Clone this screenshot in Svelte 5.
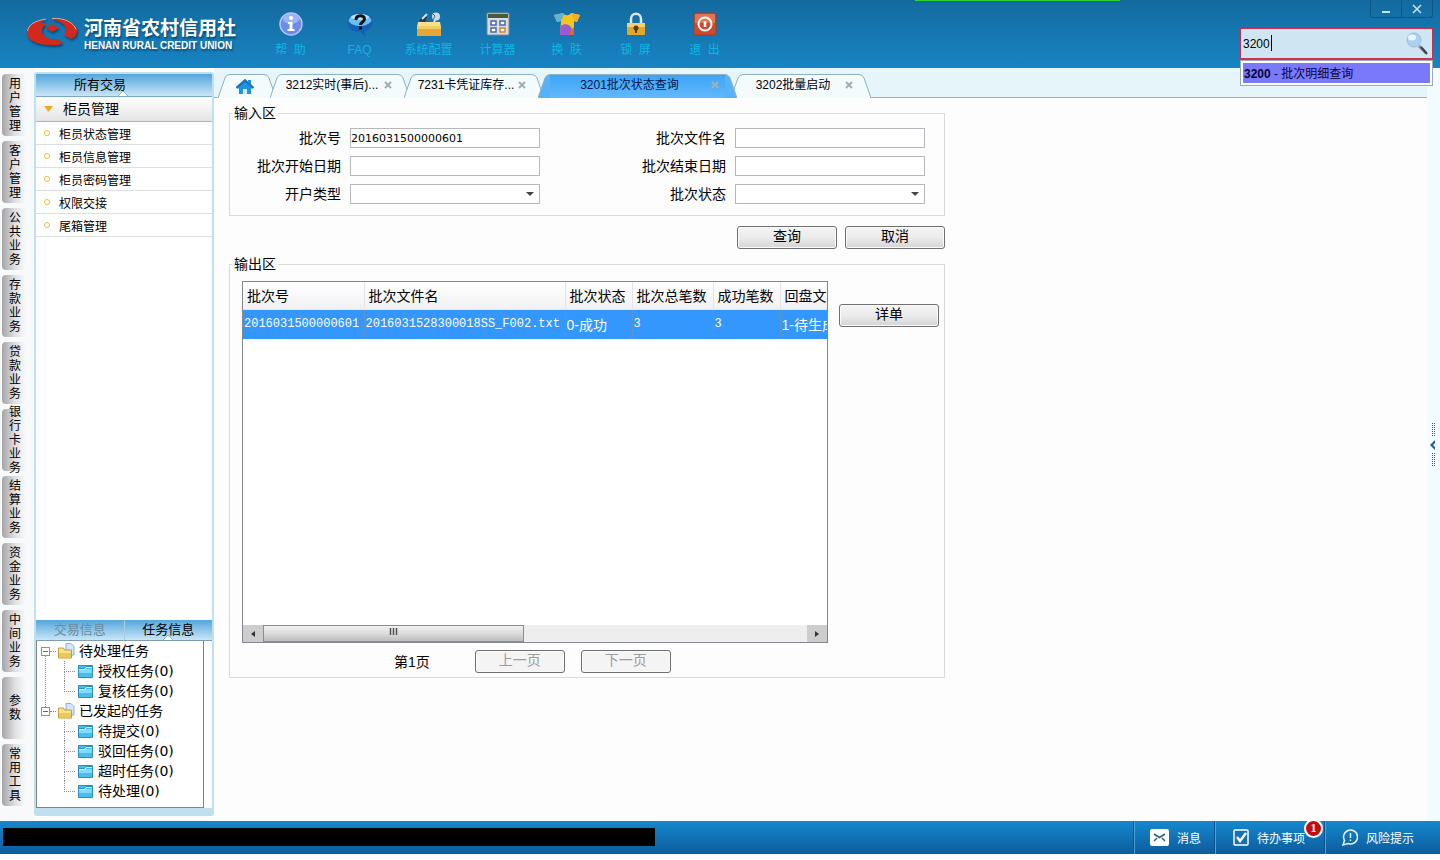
<script>
    let code = $state("3200");
    let batchNo = $state("2016031500000601");
    let activeTab = $state("3201批次状态查询");

    const tools = [
        { icon: "help", label: "帮\u00a0 助" },
        { icon: "faq", label: "FAQ" },
        { icon: "config", label: "系统配置" },
        { icon: "calc", label: "计算器" },
        { icon: "skin", label: "换\u00a0 肤" },
        { icon: "lock", label: "锁\u00a0 屏" },
        { icon: "exit", label: "退\u00a0 出" }
    ];

    const modules = [
        "用户管理", "客户管理", "公共业务", "存款业务", "贷款业务", "银行卡业务",
        "结算业务", "资金业务", "中间业务", "参数", "常用工具"
    ];

    const menu = ["柜员状态管理", "柜员信息管理", "柜员密码管理", "权限交接", "尾箱管理"];

    const tasks = [
        { name: "待处理任务", children: ["授权任务(0)", "复核任务(0)"] },
        { name: "已发起的任务", children: ["待提交(0)", "驳回任务(0)", "超时任务(0)", "待处理(0)"] }
    ];

    const tabs = ["3212实时(事后)...", "7231卡凭证库存...", "3201批次状态查询", "3202批量启动"];

    const columns = ["批次号", "批次文件名", "批次状态", "批次总笔数", "成功笔数", "回盘文"];
    const rows = [
        ["2016031500000601", "2016031528300018SS_F002.txt", "0-成功", "3", "3", "1-待生成"]
    ];
</script>

{#snippet toolIcon(name)}
    <svg class="tool-icon" viewBox="0 0 28 26" aria-hidden="true">
        {#if name === "help"}
            <circle cx="14" cy="12" r="11" fill="#6d8be8" stroke="#b4c6f7" stroke-width="1.5" />
            <ellipse cx="14" cy="7" rx="8" ry="5" fill="#9db4f5" />
            <circle cx="14" cy="6" r="2" fill="#fff" />
            <path d="M11 10h4.500v7h2v2h-7v-2h2v-5h-1.500z" fill="#fff" />
        {:else if name === "faq"}
            <path d="M14 1c8 0 12.500 4 12.500 9.500 0 5-4 8-8 9l1 5-5-4.500C6 20 1.500 16 1.500 10.500S6 1 14 1z" fill="#1560b4" />
            <path d="M14 2c7 0 11 3 11.500 7-3 4-8 5-11.500 5S5 13 2.500 9C3.500 4 8 2 14 2z" fill="#6dbcf2" />
            <ellipse cx="14" cy="5" rx="9" ry="3" fill="#b5e0fb" />
            <path d="M10 8c0-5.500 8.500-5.500 8.500-1 0 3-4 3-4 6" fill="none" stroke="#111" stroke-width="3" />
            <rect x="13" y="14.500" width="3" height="3" fill="#111" />
        {:else if name === "config"}
            <path d="M4 9l4-5 4 1-2 5z" fill="#333" />
            <path d="M7 7L12 2M19 10l3-7" stroke="#ddd" stroke-width="2" />
            <circle cx="21" cy="4.500" r="4" fill="#cfdbe4" />
            <path d="M17 1l3 3-2 4" stroke="#567" fill="none" />
            <path d="M3 10h22l1 5H2z" fill="#f9df8e" />
            <rect x="2" y="14" width="24" height="10" fill="#e3a637" />
            <rect x="2" y="14" width="24" height="3" fill="#f4ca62" />
        {:else if name === "calc"}
            <rect x="3" y="1" width="22" height="22" rx="1" fill="#d9dcdf" stroke="#7d858c" />
            <rect x="4" y="2" width="20" height="4" fill="#4a5b36" />
            <g fill="#fff" stroke="#4b68a6" stroke-width="1.500">
                <rect x="7" y="9" width="5" height="4" />
                <rect x="16" y="9" width="5" height="4" />
                <rect x="7" y="16" width="5" height="4" />
                <rect x="16" y="16" width="5" height="4" stroke="#d78230" />
            </g>
        {:else if name === "skin"}
            <path d="M10 1L1 3l3 7 4-1-1 14h14V9l3 1 3-7-9-2c-2 3-6 3-8 0z" fill="#f6c51f" />
            <path d="M10 1L1 3l3 7 4-1 3-6z" fill="#63b4d4" />
            <path d="M18 1l9 2-3 7-3-1z" fill="#f2ae2e" />
            <path d="M7.500 14c4-3 9-2 11 2 1 3 0 5-2 7H7z" fill="#9a5ad2" />
            <path d="M18 18l3-3v8h-5z" fill="#e8603c" />
        {:else if name === "lock"}
            <path d="M9 12V7c0-7 10-7 10 0v5" fill="none" stroke="#e2e5e8" stroke-width="2.500" />
            <rect x="5" y="11" width="18" height="12" rx="1" fill="#e0a62e" />
            <rect x="5" y="11" width="18" height="4" fill="#f6d169" />
            <circle cx="14" cy="16" r="2.500" fill="#5c3d0c" />
            <rect x="13" y="16" width="2" height="5" fill="#5c3d0c" />
        {:else}
            <rect x="3" y="1" width="22" height="22" rx="2" fill="#cd4a2e" stroke="#a83a26" />
            <rect x="4" y="2" width="20" height="9" fill="#e07555" />
            <circle cx="14" cy="12" r="6.500" fill="none" stroke="#fff" stroke-width="2" />
            <path d="M14 9v6" stroke="#fff" stroke-width="2.500" />
        {/if}
    </svg>
{/snippet}

{#snippet notch()}
    <svg class="notch" viewBox="0 0 10 5" aria-hidden="true">
        <path d="M0 5L5 0l5 5" fill="#fff" stroke="#7db4d6" />
    </svg>
{/snippet}

{#snippet tabEdge(side)}
    <svg class="tab-edge" viewBox="0 0 12 24" aria-hidden="true">
        {#if side === "left"}
            <path d="M0 24L7 4Q8.500 .5 12 .5V24z" class="fill" />
            <path d="M0 24L7 4Q8.500 .5 12 .5" class="line" />
        {:else}
            <path d="M12 24L5 4Q3.500 .5 0 .5V24z" class="fill" />
            <path d="M12 24L5 4Q3.500 .5 0 .5" class="line" />
        {/if}
    </svg>
{/snippet}

<div class="app">
    <header>
        <div class="logo">
            <svg class="emblem" viewBox="0 0 52 30" aria-hidden="true">
                <path d="M20 2C8 4 1 9 1 16c0 8 12 13 31 12l5-2-6-4c-9 1-15-3-15-8 0-3 1-5 4-7l-6-2z" fill="#d3281c" />
                <path d="M26 2c15-2 25 5 25 12 0 4-2 6-6 8l-7-4c3-3 3-7 0-10-3-3-7-5-12-6z" fill="#d3281c" />
                <path d="M26 1.500c12-1 22 4 24 11M1.500 14C3 7 9 4 20 2" fill="none" stroke="#f0a392" stroke-width="1" />
                <path d="M26 7l7 4-7 4-6-4z" fill="#d3281c" />
            </svg>
            <div class="brand">
                <strong>河南省农村信用社</strong>
                <span>HENAN RURAL CREDIT UNION</span>
            </div>
        </div>
        <nav class="tools">
            {#each tools as tool}
                <button type="button">
                    {@render toolIcon(tool.icon)}
                    <span>{tool.label}</span>
                </button>
            {/each}
        </nav>
        <div class="progress"></div>
        <div class="corner">
            <div class="window-buttons">
                <button type="button" aria-label="最小化">
                    <svg width="10" height="10" viewBox="0 0 10 10"><path d="M1 8h8" stroke="#c8e4f4" stroke-width="2" /></svg>
                </button>
                <button type="button" aria-label="关闭">
                    <svg width="10" height="10" viewBox="0 0 10 10"><path d="M1 1l8 8M9 1L1 9" stroke="#c8e4f4" stroke-width="1.500" /></svg>
                </button>
            </div>
            <div class="search">
                <input type="text" aria-label="交易码" bind:value={code} />
                <i class="caret"></i>
                <svg class="magnifier" viewBox="0 0 24 24" aria-hidden="true">
                    <path d="M14 14l7 7" stroke="#8a8f94" stroke-width="3" />
                    <path d="M16 15l6 7" stroke="#3c4146" stroke-width="2" />
                    <circle cx="9" cy="8" r="7" fill="#a9d2f2" stroke="#9dbbd9" stroke-width="1" />
                    <ellipse cx="7" cy="5.500" rx="4" ry="3" fill="#e9f6ff" />
                </svg>
            </div>
            <ul class="suggest">
                <li><button type="button"><b>3200</b> - 批次明细查询</button></li>
            </ul>
        </div>
    </header>

    <div class="body">
        <nav class="rail">
            {#each modules as name}
                <button type="button"><span>{name}</span></button>
            {/each}
        </nav>

        <aside>
            <div class="side-head">
                <span>所有交易{@render notch()}</span>
            </div>
            <button type="button" class="group">
                <svg width="9" height="7" viewBox="0 0 9 7" aria-hidden="true"><path d="M0 1h9L5 6.500H4z" fill="#eba928" /></svg>
                柜员管理
            </button>
            <ul class="menu">
                {#each menu as item}
                    <li><button type="button">{item}</button></li>
                {/each}
            </ul>
            <div class="side-tabs">
                <button type="button">交易信息</button>
                <button type="button" class="on">任务信息{@render notch()}</button>
            </div>
            <ul class="tree">
                {#each tasks as task}
                    <li class="branch">
                        <div class="node">
                            <button type="button" class="toggle" aria-label="折叠"></button>
                            <i class="dots"></i>
                            <svg width="17" height="16" viewBox="0 0 17 16" aria-hidden="true">
                                <path d="M8 .5h5l3 3V12H8z" fill="#d3e6fb" stroke="#86aee0" />
                                <path d="M.5 5h5l1 2h7v8h-13z" fill="#f8e28c" stroke="#c69c38" />
                                <path d="M1 10h12v4H1z" fill="#eec858" />
                            </svg>
                            <span>{task.name}</span>
                        </div>
                        <ul>
                            {#each task.children as child}
                                <li class="leaf">
                                    <svg width="15" height="13" viewBox="0 0 15 13" aria-hidden="true">
                                        <path d="M.5 .5h14v12H.5z" fill="#45bff0" stroke="#2a8cc0" />
                                        <path d="M1 4h13v4H1z" fill="#85dafa" />
                                        <path d="M1 3.500h5l2-2h6" fill="none" stroke="#2a8cc0" />
                                        <path d="M1 4.500h6l1-2h6" fill="none" stroke="#d8f3ff" />
                                    </svg>
                                    <span>{child}</span>
                                </li>
                            {/each}
                        </ul>
                    </li>
                {/each}
            </ul>
        </aside>

        <main>
            <div class="tabs">
                <div class="tab home">
                    {@render tabEdge("left")}
                    <button type="button" class="tab-label" aria-label="首页">
                        <svg width="18" height="16" viewBox="0 0 18 16" aria-hidden="true">
                            <path d="M9 0L0 8l1 1.500h2V15h4v-5h4v5h4V9.500h2L18 8l-3-2.500V1h-3v2z" fill="#1f93e2" />
                            <path d="M9 0L0 8l1 1.500L9 3l8 6.500L18 8z" fill="#1673bb" />
                            <path d="M8.500 10v5M10 10v5" stroke="#bfe4fb" />
                        </svg>
                    </button>
                    {@render tabEdge("right")}
                </div>
                {#each tabs as tab}
                    <div class="tab" class:active={tab === activeTab}>
                        {@render tabEdge("left")}
                        <button type="button" class="tab-label" onclick={() => (activeTab = tab)}>{tab}</button>
                        <button type="button" class="close" aria-label="关闭标签">
                            <svg width="8" height="8" viewBox="0 0 8 8"><path d="M1 1l6 6M7 1L1 7" stroke="#a4adb2" stroke-width="2" /></svg>
                        </button>
                        {@render tabEdge("right")}
                    </div>
                {/each}
            </div>

            <div class="content">
                <fieldset>
                    <legend>输入区</legend>
                    <div class="form">
                        <label for="batch-no">批次号</label>
                        <input id="batch-no" type="text" bind:value={batchNo} />
                        <label for="file-name">批次文件名</label>
                        <input id="file-name" type="text" />
                        <label for="start-date">批次开始日期</label>
                        <input id="start-date" type="text" />
                        <label for="end-date">批次结束日期</label>
                        <input id="end-date" type="text" />
                        <label for="open-type">开户类型</label>
                        <div class="select"><select id="open-type"><option></option></select></div>
                        <label for="batch-state">批次状态</label>
                        <div class="select"><select id="batch-state"><option></option></select></div>
                    </div>
                </fieldset>

                <div class="actions">
                    <button type="button" class="btn">查询</button>
                    <button type="button" class="btn">取消</button>
                </div>

                <fieldset>
                    <legend>输出区</legend>
                    <div class="output">
                        <div class="result">
                            <div class="grid">
                                <div class="viewport">
                                    <table>
                                        <thead>
                                            <tr>
                                                {#each columns as column}
                                                    <th>{column}</th>
                                                {/each}
                                            </tr>
                                        </thead>
                                        <tbody>
                                            {#each rows as row}
                                                <tr>
                                                    {#each row as cell}
                                                        <td class:state={cell.includes("-")}>{cell}</td>
                                                    {/each}
                                                </tr>
                                            {/each}
                                        </tbody>
                                    </table>
                                </div>
                                <div class="scrollbar">
                                    <button type="button" aria-label="向左">
                                        <svg width="4" height="6" viewBox="0 0 4 6"><path d="M4 0v6L0 3z" fill="#333" /></svg>
                                    </button>
                                    <div class="track">
                                        <div class="thumb">
                                            <svg width="9" height="7" viewBox="0 0 9 7"><path d="M1.500 0v7M4.500 0v7M7.500 0v7" stroke="#555" stroke-width="1.500" /></svg>
                                        </div>
                                    </div>
                                    <button type="button" aria-label="向右">
                                        <svg width="4" height="6" viewBox="0 0 4 6"><path d="M0 0v6l4-3z" fill="#333" /></svg>
                                    </button>
                                </div>
                            </div>
                            <div class="pager">
                                <span>第1页</span>
                                <button type="button" class="btn" disabled>上一页</button>
                                <button type="button" class="btn" disabled>下一页</button>
                            </div>
                        </div>
                        <button type="button" class="btn detail">详单</button>
                    </div>
                </fieldset>
            </div>
        </main>

        <button type="button" class="handle" aria-label="展开">
            <svg width="3" height="44" viewBox="0 0 3 44">
                <path d="M.5 0v14M2.500 0v14M.5 30v14M2.500 30v14" stroke="#245f91" stroke-dasharray="1 1" />
            </svg>
            <svg class="arrow" width="5" height="10" viewBox="0 0 5 10"><path d="M5 0v3L3 5l2 2v3L0 5z" fill="#1f5f95" /></svg>
        </button>
    </div>

    <footer>
        <div class="status"></div>
        <button type="button" class="message">
            <svg width="19" height="17" viewBox="0 0 19 17" aria-hidden="true">
                <rect x="0" y="0" width="19" height="17" rx="2" fill="#fff" />
                <path d="M4 5l5.500 3.500L15 5M4 12l3-3M15 12l-3-3" fill="none" stroke="#2a5f80" stroke-width="1.500" />
            </svg>
            消息
        </button>
        <button type="button" class="todo">
            <svg width="16" height="17" viewBox="0 0 16 17" aria-hidden="true">
                <rect x="1" y="1" width="14" height="15" rx="1" fill="#1670b0" stroke="#fff" stroke-width="1.500" />
                <path d="M4 8l3 4 6-8" fill="none" stroke="#fff" stroke-width="2.500" />
            </svg>
            待办事项
            <em>1</em>
        </button>
        <button type="button" class="risk">
            <svg width="17" height="18" viewBox="0 0 17 18" aria-hidden="true">
                <path d="M3.500 12.500A7 7 0 1 1 7 15.500L2 17z" fill="none" stroke="#e6f3fb" stroke-width="1.500" />
                <path d="M9.500 5v5M9.500 11.500v1.500" stroke="#e6f3fb" stroke-width="1.500" />
            </svg>
            风险提示
        </button>
    </footer>
</div>

<style>
:global(body) {
    background: #fdfdfe;
}

.app {
    display: flex;
    flex-direction: column;
    min-height: 100vh;
    box-sizing: border-box;
    padding-bottom: 6px;
    font-family: "Liberation Sans", "Noto Sans CJK SC", sans-serif;
    font-size: 12px;
    color: #000;
}

button,
input,
select {
    font: inherit;
    color: inherit;
    margin: 0;
    padding: 0;
    border: none;
    background: none;
    box-sizing: border-box;
}

ul {
    list-style: none;
    margin: 0;
    padding: 0;
}

svg {
    display: block;
    flex: none;
}

/* top bar */
header {
    position: relative;
    display: flex;
    height: 68px;
    background: linear-gradient(#136a9f, #1884c3);
}

.logo {
    display: flex;
    width: 230px;
    padding-left: 26px;
    padding-top: 17px;
    gap: 6px;
}

.emblem {
    width: 52px;
    height: 30px;
    filter: drop-shadow(1px 2px 1px #0a4a75);
}

.brand {
    display: flex;
    flex-direction: column;
    padding-top: 1px;
    color: #fff;
    white-space: nowrap;
    text-shadow: 1px 2px 2px #0a4a75;
}

.brand strong {
    font-size: 19px;
    line-height: 22px;
}

.brand span {
    font-size: 10px;
    font-weight: bold;
    line-height: 12px;
}

.tools {
    display: flex;
}

.tools button {
    display: flex;
    flex-direction: column;
    align-items: center;
    width: 69px;
    padding-top: 12px;
    color: #0fb5e4;
    line-height: 24px;
}

.tool-icon {
    width: 28px;
    height: 26px;
}

.progress {
    position: absolute;
    top: 0;
    left: 915px;
    width: 205px;
    height: 1px;
    background: #2fd52f;
}

.corner {
    position: absolute;
    z-index: 2;
    top: 0;
    right: 7px;
    width: 193px;
}

.window-buttons {
    display: flex;
    width: 63px;
    height: 18px;
    margin-left: auto;
    margin-bottom: 10px;
    border: 1px solid #0f5682;
    border-top: none;
    border-radius: 0 0 3px 3px;
    box-sizing: border-box;
}

.window-buttons button {
    display: flex;
    flex: 1;
    align-items: center;
    justify-content: center;
}

.window-buttons button + button {
    border-left: 1px solid #0f5682;
}

.search {
    position: relative;
    display: flex;
    height: 31px;
    padding: 0 3px 0 2px;
    align-items: center;
    border: 1px solid #c8304c;
    background: #cfe6f2;
    box-sizing: border-box;
}

.search input {
    flex: 1;
    min-width: 0;
    outline: none;
}

.caret {
    position: absolute;
    left: 30px;
    top: 6px;
    width: 1px;
    height: 16px;
    background: #000;
}

.magnifier {
    width: 24px;
    height: 24px;
}

.suggest {
    margin-top: 1px;
    padding: 2px;
    border: 1px solid #9aa9b5;
    background: #fff;
}

.suggest button {
    display: block;
    width: 100%;
    padding-left: 1px;
    padding-top: 2px;
    background: #7b79fb;
    color: #06063a;
    text-align: left;
    line-height: 18px;
}

/* middle area */
.body {
    display: flex;
    flex: 1;
    background: #fdfdfe;
}

.rail {
    display: flex;
    flex-direction: column;
    gap: 5px;
    width: 34px;
    padding: 6px 0 0 2px;
    box-sizing: border-box;
    background: #f8f9fa;
}

.rail button {
    display: flex;
    align-items: center;
    justify-content: center;
    width: 26px;
    height: 62px;
    border-radius: 4px 0 0 4px;
    background: linear-gradient(90deg, #a4a4a6, #e0e0e2 50%, #f8f9fa 90%);
    line-height: 14px;
}

/* one character per line */
.rail span {
    width: 12px;
    overflow-wrap: anywhere;
}

aside {
    display: flex;
    flex-direction: column;
    width: 180px;
    margin: 4px 0 5px;
    border: 2px solid #bfe0ee;
    border-bottom-width: 8px;
    border-radius: 3px;
    box-sizing: border-box;
    background: #fff;
}

.side-head {
    padding-left: 38px;
    border-bottom: 1px solid #79a9c6;
    background: linear-gradient(#54a5dc, #c9e6f7);
    font-size: 13px;
    line-height: 22px;
}

.side-head span,
.side-tabs button {
    position: relative;
}

.notch {
    position: absolute;
    bottom: -4px;
    right: -2px;
    width: 10px;
    height: 5px;
}

.group {
    display: flex;
    align-items: center;
    gap: 10px;
    height: 25px;
    padding-left: 8px;
    padding-bottom: 2px;
    border-bottom: 1px solid #b4b4b4;
    background: linear-gradient(#fff, #e4e4e4);
    font-size: 14px;
}

.menu {
    flex: 1;
}

.menu button {
    display: flex;
    align-items: center;
    gap: 9px;
    width: 100%;
    height: 23px;
    padding-left: 8px;
    border-bottom: 1px solid #dcdfe4;
}

.menu button::before {
    content: "";
    width: 4px;
    height: 4px;
    border: 1px solid #e8bd48;
    border-radius: 50%;
}

.side-tabs {
    display: flex;
    border-bottom: 1px solid #7f9db0;
    background: linear-gradient(#54a5dc, #c9e6f7);
    font-size: 13px;
    line-height: 20px;
}

.side-tabs button {
    flex: 1;
    color: #6b8ba0;
}

.side-tabs button + button {
    border-left: 1px solid #a9cfe6;
}

.side-tabs .on {
    color: #000;
}

.side-tabs .notch {
    right: 39px;
    bottom: 0;
}

.tree {
    margin-right: 8px;
    padding: 0 0 6px 4px;
    border: 1px solid #7d8388;
    border-top: none;
    font-family: "DejaVu Sans", "Noto Sans CJK SC", sans-serif;
    font-size: 14px;
    line-height: 20px;
    white-space: nowrap;
}

.branch {
    position: relative;
}

.branch:not(:last-child)::after {
    content: "";
    position: absolute;
    left: 4px;
    top: 15px;
    bottom: -6px;
    border-left: 1px dotted #888;
}

.node {
    display: flex;
    align-items: center;
    height: 20px;
}

.toggle {
    width: 9px;
    height: 9px;
    border: 1px solid #8d9297;
    background: linear-gradient(#666, #666) center / 5px 1px no-repeat #fff;
}

.dots {
    width: 6px;
    margin-right: 2px;
    border-top: 1px dotted #888;
}

.node span {
    padding-left: 4px;
}

.leaf {
    position: relative;
    display: flex;
    align-items: center;
    gap: 5px;
    height: 20px;
    padding-left: 37px;
}

.leaf::before {
    content: "";
    position: absolute;
    left: 23px;
    top: 0;
    width: 10px;
    height: 10px;
    border: dotted #888;
    border-width: 0 0 1px 1px;
}

.leaf:not(:last-child)::after {
    content: "";
    position: absolute;
    left: 23px;
    top: 10px;
    height: 10px;
    border-left: 1px dotted #888;
}

/* work area */
main {
    flex: 1;
    min-width: 0;
}

.tabs {
    display: flex;
    height: 30px;
    padding: 6px 0 0 4px;
    border-bottom: 1px solid #8fb5c9;
    box-sizing: border-box;
    background: #e6f5fa;
}

.tab {
    position: relative;
    display: flex;
    width: 140px;
    height: 24px;
    margin-right: -6px;
}

.tab.home {
    width: 58px;
}

.tab.active {
    z-index: 1;
    width: 199px;
    color: #03164d;
}

.tab-edge {
    width: 12px;
    height: 24px;
}

.tab-edge .fill {
    fill: #f4fbfd;
}

.tab-edge .line {
    fill: none;
    stroke: #8fb0c0;
}

.active .tab-edge .fill {
    fill: #55b2fb;
}

.tab-label,
.close {
    border-top: 1px solid #8fb0c0;
    background: #f4fbfd;
    white-space: nowrap;
}

.tab-label {
    display: flex;
    flex: 1;
    align-items: center;
    justify-content: center;
    padding-bottom: 6px;
}

.home .tab-label {
    padding: 0 4px 0 0;
}

.close {
    display: flex;
    align-items: center;
    width: 16px;
    padding: 0 0 4px 2px;
}

.active .tab-label,
.active .close {
    background: linear-gradient(#3ea3f4, #62b9fd);
}

.content {
    width: 716px;
    max-width: 100%;
    padding: 5px 0 0 15px;
    font-size: 14px;
}

fieldset {
    min-width: 0;
    margin: 0;
    padding: 0;
    border: 1px solid #d9dadd;
}

legend {
    margin-left: 2px;
    padding: 0 2px;
    line-height: 20px;
}

.form {
    display: grid;
    grid-template-columns: 111px 190px 1fr 190px;
    gap: 8px 9px;
    padding: 5px 19px 11px 0;
}

.form label {
    text-align: right;
    line-height: 20px;
}

.form input,
.form select {
    display: block;
    width: 100%;
    height: 20px;
    padding: 0;
    border: 1px solid #b5b8bd;
    border-radius: 0;
    background: #fff;
    font-family: "DejaVu Sans", "Noto Sans CJK SC", sans-serif;
    font-size: 11px;
    appearance: none;
}

.select {
    position: relative;
}

.select::after {
    content: "";
    position: absolute;
    right: 6px;
    top: 8px;
    border: 4px solid transparent;
    border-top-color: #444;
    border-bottom: none;
    pointer-events: none;
}

.actions {
    display: flex;
    justify-content: flex-end;
    gap: 8px;
    padding: 10px 0 5px;
}

.btn {
    width: 100px;
    height: 23px;
    padding-bottom: 2px;
    border: 1px solid #707070;
    border-radius: 3px;
    background: linear-gradient(#f4f4f4, #ebebeb 50%, #d4d4d4);
    box-shadow: inset 0 0 0 1px #fafafa;
    line-height: 19px;
}

.btn:disabled {
    background: #f4f4f4;
    color: #9c9c9c;
}

.output {
    display: flex;
    gap: 11px;
    padding: 7px 5px 4px 12px;
}

.result {
    flex: 1;
    min-width: 0;
}

.detail {
    margin-top: 23px;
}

.grid {
    display: flex;
    flex-direction: column;
    min-height: 360px;
    border: 1px solid #828790;
    background: #fff;
}

.viewport {
    flex: 1;
    overflow: hidden;
}

table {
    width: 640px;
    border-collapse: collapse;
    table-layout: fixed;
}

th,
td {
    overflow: hidden;
    box-sizing: border-box;
    font-weight: normal;
    text-align: left;
    white-space: nowrap;
}

th {
    height: 27px;
    padding: 0 0 0 4px;
    border-right: 1px solid #e3e4e8;
    border-bottom: 1px solid #d8ecf4;
    background: linear-gradient(#fff, #f1f1f4);
}

th:nth-child(1) { width: 121px; }
th:nth-child(2) { width: 201px; }
th:nth-child(3) { width: 67px; }
th:nth-child(4) { width: 81px; }
th:nth-child(5) { width: 67px; }

td {
    height: 30px;
    padding: 0 0 0 1px;
    border-right: 1px solid #5f92c6;
    background: #3397fd;
    color: #fff;
    font-family: "Liberation Mono", "Noto Sans CJK SC", monospace;
    font-size: 12px;
}

td.state {
    font-family: "Liberation Sans", "Noto Sans CJK SC", sans-serif;
    font-size: 14px;
}

.scrollbar {
    display: flex;
    height: 17px;
    background: #eee;
}

.scrollbar button {
    display: flex;
    align-items: center;
    justify-content: center;
    width: 20px;
    background: #cdcdcd;
}

.track {
    display: flex;
    flex: 1;
}

.thumb {
    display: flex;
    justify-content: center;
    width: 48%;
    padding-top: 2px;
    border: 1px solid #8c8c8c;
    box-sizing: border-box;
    background: linear-gradient(#f0f0f0, #dcdcdc 50%, #bebebe);
}

.pager {
    display: flex;
    align-items: center;
    gap: 16px;
    padding-top: 7px;
    padding-left: 152px;
    line-height: 20px;
}

.pager span {
    margin-right: 29px;
}

.pager .btn {
    width: 90px;
}

.handle {
    position: relative;
    display: flex;
    align-items: center;
    justify-content: flex-end;
    width: 13px;
    padding-right: 5px;
    background: #f2fbff;
}

.handle .arrow {
    position: absolute;
    right: 5px;
}

/* status bar */
footer {
    display: flex;
    height: 33px;
    background: linear-gradient(#1588ce, #0c5c9c);
    color: #fff;
}

.status {
    width: 652px;
    height: 18px;
    margin: 7px auto 0 3px;
    background: #000;
}

footer button {
    position: relative;
    display: flex;
    align-items: center;
    gap: 8px;
    padding-left: 15px;
    padding-bottom: 1px;
    border-left: 1px solid #4ea3d6;
    box-shadow: -1px 0 #0b5187;
}

.message {
    width: 81px;
}

.todo {
    width: 110px;
    padding-left: 17px;
}

.risk {
    width: 115px;
}

.todo em {
    position: absolute;
    top: -2px;
    right: 2px;
    width: 15px;
    height: 15px;
    border: 2px solid #fff;
    border-radius: 50%;
    background: #c40d12;
    font-family: "Liberation Serif", serif;
    font-size: 12px;
    font-style: normal;
    font-weight: bold;
    line-height: 15px;
    text-align: center;
}
</style>
